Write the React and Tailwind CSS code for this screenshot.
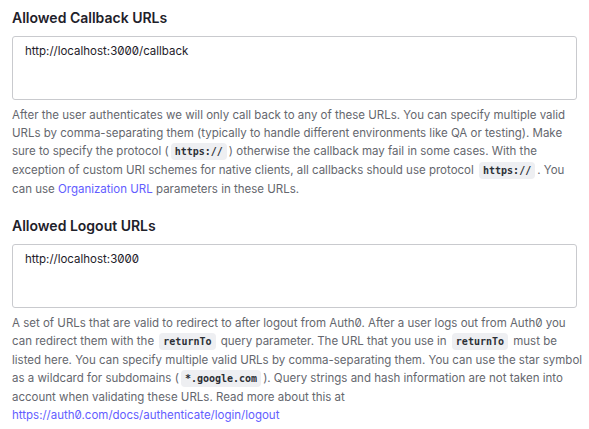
import React from "react";

const font = { fontFamily: "Inter, 'Noto Sans', sans-serif" };

function Code({ children }) {
  return (
    <code className="mx-[2px] rounded-[4px] bg-[#eeeff2] px-[4px] py-[3px] font-['DejaVu_Sans_Mono',monospace] text-[10px] font-semibold text-[#2c2f36]">
      {children}
    </code>
  );
}

function Field({ label, value, lines }) {
  return (
    <div>
      <label className="block text-[14px] font-semibold leading-[18px] text-[#1e212a]">{label}</label>
      <textarea
        readOnly
        defaultValue={value}
        className="mt-[9px] block h-[64px] w-full resize-none rounded-[3px] border border-[#c9cace] bg-white px-[12px] py-[5px] text-[11.5px] leading-[18px] text-[#1e212a] outline-none"
      />
      <p className="mt-[6px] text-[11.5px] leading-[18px] text-[#65676e]">
        {lines.map((line, i) => (
          <span key={i} className="block whitespace-nowrap">
            {line}
          </span>
        ))}
      </p>
    </div>
  );
}

const callbackLines = [
  "After the user authenticates we will only call back to any of these URLs. You can specify multiple valid",
  "URLs by comma-separating them (typically to handle different environments like QA or testing). Make",
  <>sure to specify the protocol (<Code>https://</Code>) otherwise the callback may fail in some cases. With the</>,
  <>exception of custom URI schemes for native clients, all callbacks should use protocol <Code>https://</Code>. You</>,
  <>can use <a className="text-[#635dff]">Organization URL</a> parameters in these URLs.</>,
];

const logoutLines = [
  "A set of URLs that are valid to redirect to after logout from Auth0. After a user logs out from Auth0 you",
  <>can redirect them with the <Code>returnTo</Code> query parameter. The URL that you use in <Code>returnTo</Code> must be</>,
  "listed here. You can specify multiple valid URLs by comma-separating them. You can use the star symbol",
  <>as a wildcard for subdomains (<Code>*.google.com</Code>). Query strings and hash information are not taken into</>,
  "account when validating these URLs. Read more about this at",
  <a className="text-[#635dff]">https://auth0.com/docs/authenticate/login/logout</a>,
];

export default function App() {
  return (
    <div className="min-h-screen bg-white px-[12px] pt-[9px] [font-feature-settings:'zero']" style={font}>
      <div className="flex flex-col gap-[19px]">
        <Field label="Allowed Callback URLs" value="http://localhost:3000/callback" lines={callbackLines} />
        <Field label="Allowed Logout URLs" value="http://localhost:3000" lines={logoutLines} />
      </div>
    </div>
  );
}
